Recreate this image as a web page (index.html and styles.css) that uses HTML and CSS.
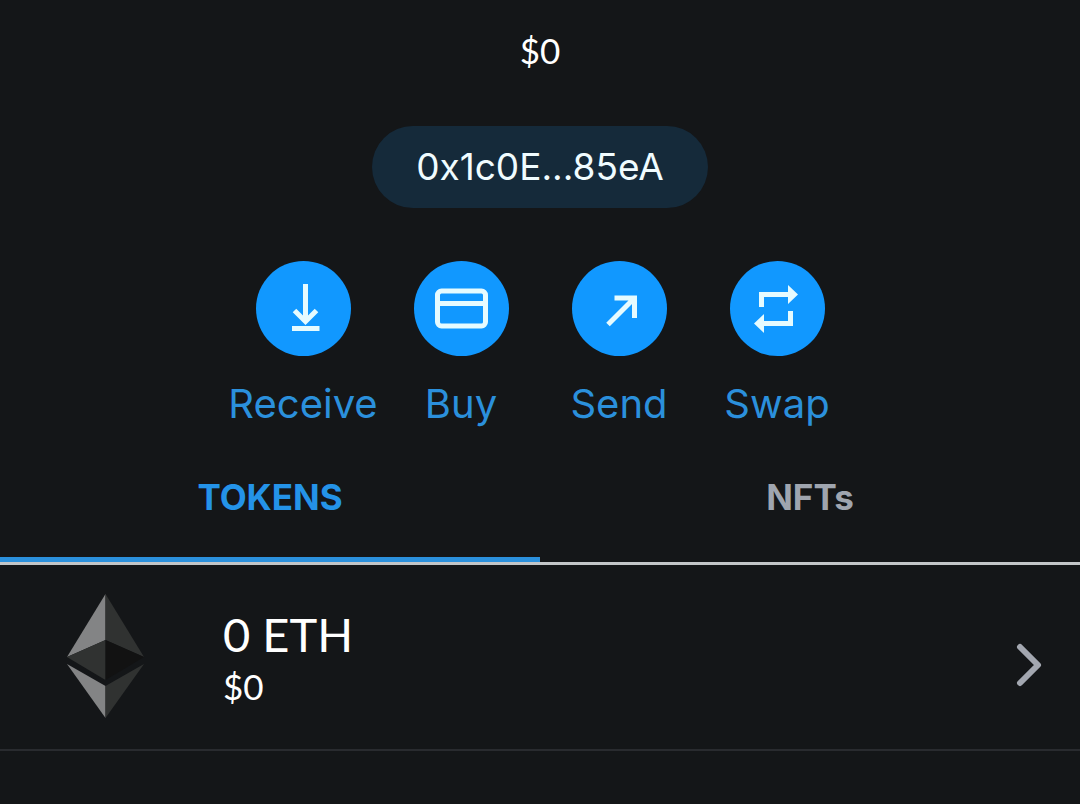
FILE: index.html
```html
<!DOCTYPE html>
<html lang="en">
<head>
  <meta charset="UTF-8" />
  <meta name="viewport" content="width=device-width, initial-scale=1.0"/>
  <title>Wallet</title>
  <link rel="stylesheet" href="styles.css">
</head>
<body>

  <header class="account">
    <div class="balance">$0</div>
    <button type="button" class="address">0x1c0E...85eA</button>
  </header>

  <div class="actions">
    <button type="button" class="action">
      <svg class="action-icon" viewBox="0 0 95 95" aria-hidden="true">
        <circle class="disc" cx="47.5" cy="47.5" r="47.5"/>
        <path class="line" d="M49.5 23V60M38.5 49.5L49.5 60.5L60.5 49.5M36 67.5H63.5"/>
      </svg>
      <span>Receive</span>
    </button>
    <button type="button" class="action">
      <svg class="action-icon" viewBox="0 0 95 95" aria-hidden="true">
        <circle class="disc" cx="47.5" cy="47.5" r="47.5"/>
        <rect class="line" x="23.5" y="30" width="48" height="35" rx="4"/>
        <path class="line" d="M23.5 42.5H71.5"/>
      </svg>
      <span>Buy</span>
    </button>
    <button type="button" class="action">
      <svg class="action-icon" viewBox="0 0 95 95" aria-hidden="true">
        <circle class="disc" cx="47.5" cy="47.5" r="47.5"/>
        <path class="line" d="M36 63.5L62 37.5M42.5 37H62.5V57"/>
      </svg>
      <span>Send</span>
    </button>
    <button type="button" class="action">
      <svg class="action-icon" viewBox="0 0 95 95" aria-hidden="true">
        <circle class="disc" cx="47.5" cy="47.5" r="47.5"/>
        <path class="solid" d="M29 31H58V24L68 33.5L58 43V36H34V46H29Z"/>
        <path class="solid" d="M63 65H34V72L24 62.5L34 53V60H58V50H63Z"/>
      </svg>
      <span>Swap</span>
    </button>
  </div>

  <nav class="tabs">
    <button type="button" class="tab active">TOKENS</button>
    <button type="button" class="tab">NFTs</button>
  </nav>

  <main>
    <a href="#eth" class="token">
      <svg class="token-logo" viewBox="0 0 77 124" aria-hidden="true">
        <path fill="#838485" d="M38.5 0V46L0 63Z"/>
        <path fill="#303231" d="M38.5 0V46L77 63Z"/>
        <path fill="#303231" d="M0 63L38.5 46V86Z"/>
        <path fill="#121212" d="M77 63L38.5 46V86Z"/>
        <path fill="#838485" d="M0 70L38.5 92V124Z"/>
        <path fill="#303231" d="M77 70L38.5 92V124Z"/>
      </svg>
      <span class="token-info">
        <span class="token-amount">0 ETH</span>
        <span class="token-fiat">$0</span>
      </span>
      <svg class="chevron" viewBox="0 0 26 44" aria-hidden="true">
        <path d="M4 4L22 22L4 40"/>
      </svg>
    </a>
  </main>

</body>
</html>
```

FILE: styles.css
```css
body {
  margin: 0;
  background: #141618;
  color: #fff;
  font-family: Inter, "Open Sans", sans-serif;
}

button {
  padding: 0;
  border: none;
  background: none;
  color: inherit;
  font: inherit;
  cursor: pointer;
}

.account {
  display: flex;
  flex-direction: column;
  align-items: center;
  gap: 54px;
  padding-top: 28px;
}

.balance,
.token-fiat {
  font-family: Lato, sans-serif;
  font-size: 35px;
  line-height: 44px;
}

.address {
  padding: 20px 44px;
  border-radius: 41px;
  background: #152a3a;
  color: #f0fcff;
  font-size: 37px;
  line-height: 42px;
}

.actions {
  display: grid;
  grid-template-columns: repeat(4, 158px);
  justify-content: center;
  padding-top: 53px;
}

.action {
  display: flex;
  flex-direction: column;
  align-items: center;
  gap: 24px;
  color: #2b90dc;
  font-size: 40px;
  line-height: 48px;
}

.action-icon {
  width: 95px;
  height: 95px;
}

.disc {
  fill: #1198ff;
}

.line {
  fill: none;
  stroke: #e6fbff;
  stroke-width: 5;
}

.solid {
  fill: #e6fbff;
}

.tabs {
  display: grid;
  grid-template-columns: 1fr 1fr;
  margin-top: 36px;
  border-bottom: 3px solid #c3c6c8;
}

.tab {
  padding: 10px 0 37px;
  border-bottom: 5px solid transparent;
  color: #9fa5af;
  font-size: 35px;
  font-weight: 700;
  line-height: 46px;
}

.tab.active {
  border-bottom-color: #2b90dc;
  color: #2493e8;
}

.token {
  display: flex;
  align-items: center;
  padding: 29px 38px 31px 67px;
  border-bottom: 2px solid #292b2f;
  color: #fff;
  text-decoration: none;
}

.token-logo {
  width: 77px;
  height: 124px;
}

.token-info {
  display: flex;
  flex: 1;
  flex-direction: column;
  padding-left: 79px;
}

.token-amount {
  font-family: Lato, sans-serif;
  font-size: 47px;
  line-height: 60px;
}

.chevron {
  width: 26px;
  height: 44px;
  margin-top: 18px;
  fill: none;
  stroke: #a3a7b0;
  stroke-width: 6;
  stroke-linecap: round;
  stroke-linejoin: round;
}
```
